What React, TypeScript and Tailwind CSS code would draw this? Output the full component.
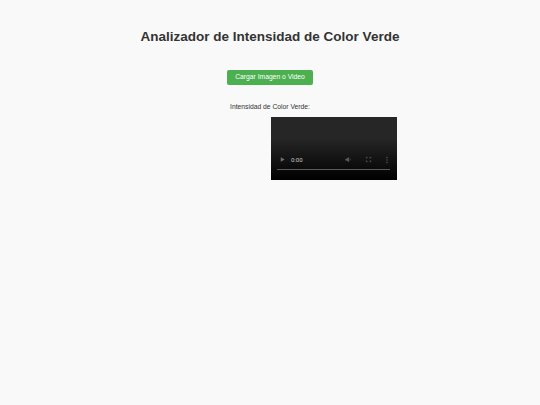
import React from 'react';

function VideoBox() {
  return (
    <div className="relative w-[126px] h-[63px] bg-[#262626] overflow-hidden">
      <div className="absolute inset-x-0 bottom-0 h-[42px] bg-gradient-to-b from-transparent to-black" />
      <div className="absolute left-[7px] right-[7px] top-[38px] flex items-center text-[6px] text-[#c8c8c8]">
        <svg width="7" height="7" viewBox="0 0 8 8" className="ml-[1px]">
          <path d="M2 1.5 L6.5 4 L2 6.5 Z" fill="#6e6e6e" />
        </svg>
        <span className="ml-[5px]" style={{ fontFamily: 'Roboto, "Liberation Sans", sans-serif' }}>0:00</span>
        <div className="flex-1" />
        <svg width="8" height="7" viewBox="0 0 8 8">
          <path d="M1 3 H2.5 L5 1 V7 L2.5 5 H1 Z" fill="#5e5e5e" />
          <path d="M6 2.8 Q7 4 6 5.2" stroke="#5e5e5e" strokeWidth="0.8" fill="none" />
        </svg>
        <svg width="7" height="7" viewBox="0 0 8 8" className="ml-[13px]">
          <path d="M1.5 3 V1.5 H3 M5 1.5 H6.5 V3 M6.5 5 V6.5 H5 M3 6.5 H1.5 V5" stroke="#5e5e5e" strokeWidth="0.9" fill="none" />
        </svg>
        <svg width="4" height="8" viewBox="0 0 4 8" className="ml-[13px] mr-[1px]">
          <circle cx="2" cy="1.5" r="0.7" fill="#5e5e5e" />
          <circle cx="2" cy="4" r="0.7" fill="#5e5e5e" />
          <circle cx="2" cy="6.5" r="0.7" fill="#5e5e5e" />
        </svg>
      </div>
      <div className="absolute left-[6px] right-[7px] top-[52px] h-[1px] bg-[#5a5a5a]" />
    </div>
  );
}

export default function App() {
  return (
    <div
      className="min-h-[405px] bg-[#f9f9f9] text-[#333] flex flex-col items-center"
      style={{ fontFamily: '"Liberation Sans", Arial, sans-serif' }}
    >
      <h1 className="mt-[29px] text-[13.5px] leading-[16px] font-bold text-[#333]">
        Analizador de Intensidad de Color Verde
      </h1>

      <button
        type="button"
        className="mt-[25px] w-[86px] h-[15px] bg-[#4caf50] text-white text-[6.75px] rounded-[2px] flex items-center justify-center"
      >
        Cargar Imagen o Video
      </button>

      <p className="mt-[18px] text-[6.75px] leading-[8px] text-[#333]">Intensidad de Color Verde:</p>

      <div className="mt-[6px] flex">
        <div className="w-[126px] h-[63px]" />
        <div className="ml-[2px]">
          <VideoBox />
        </div>
      </div>
    </div>
  );
}
